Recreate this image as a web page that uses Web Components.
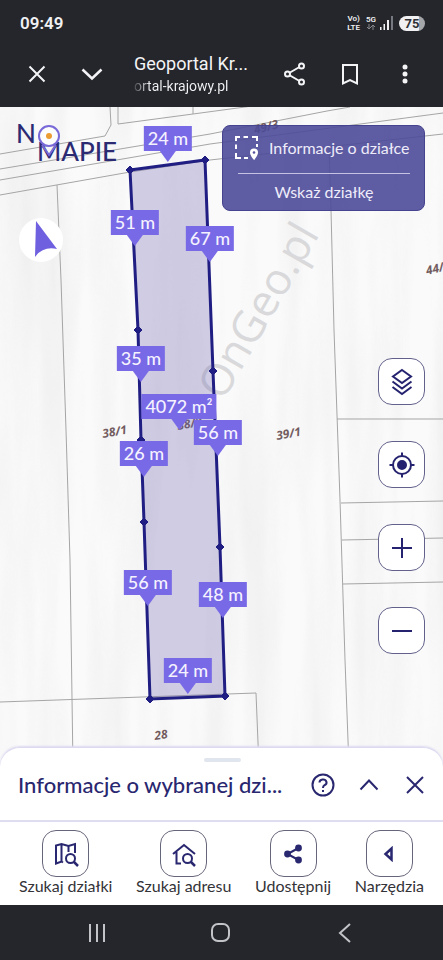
<!DOCTYPE html>
<html lang="pl">
<head>
<meta charset="utf-8">
<meta name="viewport" content="width=device-width, initial-scale=1">
<title>Geoportal Krajowy</title>
<style>
    body {
        margin: 0;
        min-height: 100vh;
        display: flex;
        flex-direction: column;
        background: #fff;
        font-family: Lato, "Open Sans", sans-serif;
        color: #29276f;
    }
    parcel-map {
        flex: 1;
    }
</style>
</head>
<body>
<status-bar></status-bar>
<browser-bar></browser-bar>
<parcel-map>
    <map-pin style="left: 168px; top: 55px">24 m</map-pin>
    <map-pin style="left: 135px; top: 139px">51 m</map-pin>
    <map-pin style="left: 210px; top: 155px">67 m</map-pin>
    <map-pin style="left: 141px; top: 275px">35 m</map-pin>
    <map-pin style="left: 179px; top: 323px">4072 m²</map-pin>
    <map-pin style="left: 218px; top: 349px">56 m</map-pin>
    <map-pin style="left: 144px; top: 370px">26 m</map-pin>
    <map-pin style="left: 148px; top: 499px">56 m</map-pin>
    <map-pin style="left: 223px; top: 511px">48 m</map-pin>
    <map-pin style="left: 188px; top: 587px">24 m</map-pin>
    <parcel-card slot="card"></parcel-card>
    <icon-button slot="controls" label="Warstwy">
        <svg width="24" height="32" viewBox="0 0 24 32" fill="none" stroke="#25236f" stroke-width="2"><path d="M12 4 21 10.500 12 17 3 10.500Z"/><path d="M2.500 15.500 12 22.500 21.500 15.500"/><path d="M2.500 21 12 28 21.500 21"/></svg>
    </icon-button>
    <icon-button slot="controls" label="Moja lokalizacja">
        <svg width="28" height="28" viewBox="0 0 28 28" fill="none" stroke="#25236f" stroke-width="2"><circle cx="14" cy="14" r="9"/><circle cx="14" cy="14" r="4" fill="#25236f"/><path d="M14 1.500V6M14 22v4.500M1.500 14H6M22 14h4.500"/></svg>
    </icon-button>
    <icon-button slot="controls" label="Przybliż">
        <svg width="24" height="24" viewBox="0 0 24 24" stroke="#25236f" stroke-width="2"><path d="M2 12h20M12 2v20"/></svg>
    </icon-button>
    <icon-button slot="controls" label="Oddal">
        <svg width="24" height="24" viewBox="0 0 24 24" stroke="#25236f" stroke-width="2"><path d="M2 12h20"/></svg>
    </icon-button>
</parcel-map>
<info-sheet>Informacje o wybranej dzi...</info-sheet>
<tool-bar>
    <tool-item label="Szukaj działki">
        <svg width="26" height="26" viewBox="0 0 26 26" fill="none" stroke="#29276f" stroke-width="2"><path d="M10 21.500 8.500 20.500 3 22.500V4.500L8.500 3l7 2L22 3v9M8.500 3v17.500M15.500 5v6"/><circle cx="17.500" cy="17.500" r="4.500"/><path d="m20.500 20.500 4.500 4.500" stroke-width="2.500"/></svg>
    </tool-item>
    <tool-item label="Szukaj adresu">
        <svg width="26" height="26" viewBox="0 0 26 26" fill="none" stroke="#29276f" stroke-width="2"><path d="M2 13 13 4l11 9M5.500 11v11.500H10"/><circle cx="16.500" cy="17.500" r="4.500"/><path d="m19.500 20.500 4.500 4.500" stroke-width="2.500"/></svg>
    </tool-item>
    <tool-item label="Udostępnij">
        <svg width="20" height="20" viewBox="0 0 20 20" fill="#29276f"><path d="M15.500 4 4.500 10l11 6" fill="none" stroke="#29276f" stroke-width="2"/><circle cx="15.500" cy="4" r="3.400"/><circle cx="4.500" cy="10" r="3.400"/><circle cx="15.500" cy="16" r="3.400"/></svg>
    </tool-item>
    <tool-item label="Narzędzia">
        <svg width="16" height="16" viewBox="0 0 16 16" fill="none" stroke="#29276f" stroke-width="2.500"><path d="M10.500 2.500v11L4.500 8Z"/></svg>
    </tool-item>
</tool-bar>
<nav-bar></nav-bar>

<script>
class StatusBar extends HTMLElement {
    connectedCallback() {
        const shadow = this.attachShadow({ mode: 'open' });
        shadow.innerHTML = `
        <style>
            :host {
                display: flex;
                justify-content: space-between;
                align-items: center;
                height: 46px;
                padding: 0 18px 0 20px;
                background: #24262c;
                color: #f1f1f3;
                font-family: Roboto, sans-serif;
            }
            .time {
                font-size: 17px;
                font-weight: 600;
            }
            .signals {
                display: flex;
                align-items: center;
                gap: 6px;
            }
            .stack {
                display: flex;
                flex-direction: column;
                align-items: center;
                font-size: 8px;
                line-height: 8px;
                font-weight: 600;
            }
            .volte {
                line-height: 9px;
            }
            .network {
                display: flex;
                align-items: center;
                gap: 3px;
            }
            .battery {
                width: 26px;
                border-radius: 8px;
                background: linear-gradient(90deg, #f1f1f3 76%, #a5a6aa 76%);
                color: #303137;
                font-size: 13px;
                line-height: 15px;
                font-weight: 700;
                text-align: center;
            }
        </style>
        <span class="time">09:49</span>
        <div class="signals">
            <div class="stack volte"><span>Vo)</span><span>LTE</span></div>
            <div class="network">
                <div class="stack">
                    <span>5G</span>
                    <svg width="10" height="6" viewBox="0 0 10 6" fill="none" stroke="#85868c"><path d="M3 0v5M1 3l2 2 2-2M7 6V1M5 3l2-2 2 2"/></svg>
                </div>
                <svg width="14" height="14" viewBox="0 0 14 14" fill="#f1f1f3"><path d="M1 11h1.500v3H1zM4.500 8H6v6H4.500zM8 4h2v10H8z"/><path d="M12 0h2v14h-2z" fill="#777980"/></svg>
            </div>
            <span class="battery">75</span>
        </div>
        `;
    }
}

customElements.define("status-bar", StatusBar);


class BrowserBar extends HTMLElement {
    connectedCallback() {
        const shadow = this.attachShadow({ mode: 'open' });
        shadow.innerHTML = `
        <style>
            :host {
                display: flex;
                align-items: center;
                height: 61px;
                padding: 0 19px 0 18px;
                background: #24262c;
                color: #f4f4f6;
                font-family: Roboto, sans-serif;
                box-sizing: border-box;
            }
            button {
                display: flex;
                justify-content: center;
                width: 38px;
                padding: 8px 0;
                border: 0;
                background: none;
                cursor: pointer;
            }
            .left, .right {
                display: flex;
                gap: 17px;
                padding-bottom: 6px;
            }
            .page {
                flex: 1;
                min-width: 0;
                padding: 0 0 5px 23px;
                overflow: hidden;
                white-space: nowrap;
            }
            .title {
                font-size: 18px;
                line-height: 24px;
            }
            .address {
                font-size: 14px;
                line-height: 21px;
                background: linear-gradient(90deg, #44464c, #f4f4f6 16px);
                background-clip: text;
                color: transparent;
            }
        </style>
        <div class="left">
            <button aria-label="Zamknij">
                <svg width="20" height="20" viewBox="0 0 20 20" fill="none" stroke="#f4f4f6" stroke-width="2"><path d="m2.500 2.500 15 15M17.500 2.500l-15 15"/></svg>
            </button>
            <button aria-label="Zwiń">
                <svg width="22" height="20" viewBox="0 0 22 20" fill="none" stroke="#f4f4f6" stroke-width="2.500"><path d="m1.500 5.500 9.500 9 9.500-9"/></svg>
            </button>
        </div>
        <div class="page">
            <div class="title">Geoportal Kr...</div>
            <div class="address">ortal-krajowy.pl</div>
        </div>
        <div class="right">
            <button aria-label="Udostępnij">
                <svg width="22" height="24" viewBox="0 0 22 24" fill="none" stroke="#f4f4f6" stroke-width="2"><path d="M15.500 5 6 10.500M6 13.500l9.500 5.500"/><circle cx="17.500" cy="4" r="2.500"/><circle cx="3.500" cy="12" r="2.500"/><circle cx="17.500" cy="20" r="2.500"/></svg>
            </button>
            <button aria-label="Zakładka">
                <svg width="20" height="24" viewBox="0 0 20 24" fill="none" stroke="#f4f4f6" stroke-width="2"><path d="M3 21.500V3h14v18.500L10 18Z"/></svg>
            </button>
            <button aria-label="Więcej">
                <svg width="8" height="24" viewBox="0 0 8 24" fill="#f4f4f6"><circle cx="4" cy="5" r="2.500"/><circle cx="4" cy="12" r="2.500"/><circle cx="4" cy="19" r="2.500"/></svg>
            </button>
        </div>
        `;
    }
}

customElements.define("browser-bar", BrowserBar);


class ParcelMap extends HTMLElement {
    connectedCallback() {
        const shadow = this.attachShadow({ mode: 'open' });
        shadow.innerHTML = `
        <style>
            :host {
                display: block;
                position: relative;
                min-height: 640px;
                overflow: hidden;
                background: #f8f8f9;
            }
            .plan {
                position: absolute;
                inset: 0;
                width: 100%;
                height: 100%;
            }
            .borders {
                fill: none;
                stroke: #a5a5a5;
                stroke-width: 1;
            }
            .numbers {
                font: italic 700 12px "Open Sans", sans-serif;
                fill: #725c60;
            }
            .logo, .compass {
                position: absolute;
                left: 16px;
            }
            .logo {
                top: 14px;
            }
            .compass {
                top: 111px;
            }
            .logo text {
                font: 500 26px Lato, sans-serif;
                fill: #2b2a72;
            }
            .card {
                position: absolute;
                top: 18px;
                right: 18px;
            }
            .controls {
                position: absolute;
                right: 18px;
                bottom: 113px;
                display: flex;
                flex-direction: column;
                gap: 36px;
            }
        </style>
        <svg class="plan">
            <defs>
                <filter id="relief" x="0" y="0" width="100%" height="100%">
                    <feTurbulence type="fractalNoise" baseFrequency="0.03 0.003" numOctaves="3" seed="8"/>
                    <feColorMatrix values="0 0 0 0 0.55  0 0 0 0 0.55  0 0 0 0 0.57  0.8 0 0 0 -0.3"/>
                </filter>
            </defs>
            <rect width="100%" height="100%" fill="#fafafa"/>
            <rect width="100%" height="100%" filter="url(#relief)" opacity="0.5"/>
            <text transform="translate(223 295) rotate(-60)" font-family="Open Sans" font-size="44" fill="#d9d9db">OnGeo.pl</text>
            <g class="borders">
                <path d="M0 47 105 29 111 18 110 0M118 0V17L193 7 260-2M193 0v7"/>
                <path d="M0 62 210 27 327 4 350 0M0 73 210 37 443 6M0 88 130 65 210 53 443 27"/>
                <path d="M57 78 61 173 66 323 70 453 73 660M0 595 256 586 259 660"/>
                <path d="M329 39 331 103 334 223 340 393 345 553 349 660"/>
                <path d="M337 312H2000M341 396 443 394H2000M342 433 443 431H2000M343 477 443 475H2000"/>
            </g>
            <g class="numbers">
                <text transform="translate(103 331) rotate(-10)">38/1</text>
                <text transform="translate(277 333) rotate(-10)">39/1</text>
                <text transform="translate(178 323) rotate(-10)">38/2</text>
                <text transform="translate(155 633) rotate(-8)">28</text>
                <text transform="translate(255 27) rotate(-14)">49/3</text>
                <text transform="translate(427 168) rotate(-14)">44/2</text>
                <text transform="translate(-23 323) rotate(-10)">37/1</text>
            </g>
            <path d="M130 63 205 53 213 264 220 440 225 589 150 592 144 415 141 333 138 223Z" fill="#6d63b0" fill-opacity="0.3" stroke="#201e82" stroke-width="3"/>
            <path d="m130 59 4 4-4 4-4-4zM205 49l4 4-4 4-4-4zM213 260l4 4-4 4-4-4zM220 436l4 4-4 4-4-4zM225 585l4 4-4 4-4-4zM150 588l4 4-4 4-4-4zM144 411l4 4-4 4-4-4zM141 329l4 4-4 4-4-4zM138 219l4 4-4 4-4-4z" fill="#201e82" stroke="#201e82"/>
        </svg>
        <svg class="logo" width="110" height="46" viewBox="0 0 110 46" role="img" aria-label="No Mapie">
            <text x="0" y="22">N</text>
            <text x="21" y="40">MAPIE</text>
            <circle cx="33" cy="15" r="10" fill="#fff" fill-opacity="0.7" stroke="#7869d8" stroke-width="2"/>
            <path d="m26 24 7 10 7-10" fill="none" stroke="#7869d8" stroke-width="2"/>
            <circle cx="33" cy="15" r="3" fill="#eb9c33"/>
        </svg>
        <svg class="compass" width="50" height="44" viewBox="0 0 50 44">
            <circle cx="25" cy="22" r="22" fill="#fff"/>
            <path d="M20 3 41 31Q27 28 19 39Z" fill="#6f60df"/>
        </svg>
        <slot></slot>
        <div class="card"><slot name="card"></slot></div>
        <div class="controls"><slot name="controls"></slot></div>
        `;
    }
}

customElements.define("parcel-map", ParcelMap);


// left and top give the tip of the pin
class MapPin extends HTMLElement {
    connectedCallback() {
        const shadow = this.attachShadow({ mode: 'open' });
        shadow.innerHTML = `
        <style>
            :host {
                position: absolute;
                display: flex;
                flex-direction: column;
                align-items: center;
                transform: translate(-50%, -100%);
                white-space: nowrap;
            }
            .text {
                padding: 0 4px;
                background: #7869e6;
                color: #f5f2ff;
                font-size: 18px;
                line-height: 25px;
                font-weight: 500;
            }
            .tail {
                border: 8px solid transparent;
                border-top: 11px solid #7869e6;
                border-bottom: 0;
            }
        </style>
        <span class="text"><slot></slot></span>
        <span class="tail"></span>
        `;
    }
}

customElements.define("map-pin", MapPin);


class ParcelCard extends HTMLElement {
    connectedCallback() {
        const shadow = this.attachShadow({ mode: 'open' });
        shadow.innerHTML = `
        <style>
            :host {
                display: block;
                box-sizing: border-box;
                width: 203px;
                padding: 0 10px 0 11px;
                border: 1px solid #46438f;
                border-radius: 8px;
                background: rgba(77, 74, 152, 0.9);
                color: #eeecfa;
            }
            .head {
                display: flex;
                align-items: center;
                gap: 10px;
                height: 43px;
                padding-bottom: 4px;
                font-size: 16px;
                white-space: nowrap;
            }
            button {
                display: block;
                width: 172px;
                height: 37px;
                margin: 0 auto;
                padding: 0 0 2px;
                border: 0;
                border-top: 1px solid #c5c2e4;
                background: none;
                color: inherit;
                font: inherit;
                font-size: 16px;
                cursor: pointer;
            }
        </style>
        <div class="head">
            <svg width="25" height="25" viewBox="0 0 25 25" fill="none" stroke="#fff" stroke-width="2"><path d="M2 6V2h4M9.500 2h4.500M18 2h5v4M23 9v3M2 9.500V14M2 18v5h5M10 23h4"/><path d="M20 25s-4-4.500-4-7.500a4 4 0 0 1 8 0c0 3-4 7.500-4 7.500Z" fill="#fff" stroke="none"/><circle cx="20" cy="17.500" r="1.300" fill="#5552a0" stroke="none"/></svg>
            <span>Informacje o działce</span>
        </div>
        <button>Wskaż działkę</button>
        `;
    }
}

customElements.define("parcel-card", ParcelCard);


class IconButton extends HTMLElement {
    connectedCallback() {
        const shadow = this.attachShadow({ mode: 'open' });
        shadow.innerHTML = `
        <style>
            :host {
                display: block;
            }
            button {
                display: flex;
                align-items: center;
                justify-content: center;
                width: 47px;
                height: 47px;
                padding: 0;
                border: 1px solid #62618b;
                border-radius: 14px;
                background: #fff;
                cursor: pointer;
            }
        </style>
        <button aria-label="${this.getAttribute('label')}"><slot></slot></button>
        `;
    }
}

customElements.define("icon-button", IconButton);


class InfoSheet extends HTMLElement {
    connectedCallback() {
        const shadow = this.attachShadow({ mode: 'open' });
        shadow.innerHTML = `
        <style>
            :host {
                display: block;
                position: relative;
                box-sizing: border-box;
                height: 75px;
                margin-top: -20px;
                padding: 10px 16px 0 18px;
                border-top: 1px solid #dcdaf0;
                border-bottom: 2px solid #dfddf0;
                border-radius: 20px 20px 0 0;
                background: #fff;
                box-shadow: 0 -1px 2px #dcdaf0;
            }
            .handle {
                width: 37px;
                height: 4px;
                margin: 0 auto;
                border-radius: 2px;
                background: #e1e6ee;
            }
            .row {
                display: flex;
                align-items: center;
                justify-content: space-between;
                height: 45px;
            }
            h2 {
                margin: 0;
                font-size: 22px;
                font-weight: 500;
                line-height: 28px;
                white-space: nowrap;
            }
            .actions {
                display: flex;
                gap: 22px;
            }
            button {
                display: flex;
                padding: 0;
                border: 0;
                background: none;
                cursor: pointer;
            }
            svg {
                fill: none;
                stroke: #29276f;
                stroke-width: 2;
            }
        </style>
        <div class="handle"></div>
        <div class="row">
            <h2><slot></slot></h2>
            <div class="actions">
                <button aria-label="Pomoc"><svg width="24" height="24" viewBox="0 0 24 24"><circle cx="12" cy="12" r="10.500"/><path d="M8.500 9.500a3.500 3 0 1 1 5 2.700Q12 13 12 15M12 17v2"/></svg></button>
                <button aria-label="Rozwiń"><svg width="24" height="24" viewBox="0 0 24 24"><path d="m3.500 16.500 8.500-9 8.500 9"/></svg></button>
                <button aria-label="Zamknij"><svg width="24" height="24" viewBox="0 0 24 24"><path d="m4 4 16 16M20 4 4 20"/></svg></button>
            </div>
        </div>
        `;
    }
}

customElements.define("info-sheet", InfoSheet);


class ToolBar extends HTMLElement {
    connectedCallback() {
        const shadow = this.attachShadow({ mode: 'open' });
        shadow.innerHTML = `
        <style>
            :host {
                display: flex;
                justify-content: space-between;
                box-sizing: border-box;
                height: 83px;
                padding: 8px 19px 0;
                background: #fff;
            }
        </style>
        <slot></slot>
        `;
    }
}

customElements.define("tool-bar", ToolBar);


class ToolItem extends HTMLElement {
    connectedCallback() {
        const shadow = this.attachShadow({ mode: 'open' });
        shadow.innerHTML = `
        <style>
            :host {
                display: block;
            }
            button {
                display: flex;
                flex-direction: column;
                align-items: center;
                padding: 0;
                border: 0;
                background: none;
                color: #333338;
                font: inherit;
                font-size: 16px;
                line-height: 18px;
                white-space: nowrap;
                cursor: pointer;
            }
            .icon {
                display: flex;
                align-items: center;
                justify-content: center;
                box-sizing: border-box;
                width: 47px;
                height: 47px;
                border: 1px solid #66667a;
                border-radius: 14px;
            }
        </style>
        <button>
            <span class="icon"><slot></slot></span>
            <span>${this.getAttribute('label')}</span>
        </button>
        `;
    }
}

customElements.define("tool-item", ToolItem);


class NavBar extends HTMLElement {
    connectedCallback() {
        const shadow = this.attachShadow({ mode: 'open' });
        shadow.innerHTML = `
        <style>
            :host {
                display: flex;
                align-items: center;
                justify-content: center;
                gap: 100px;
                height: 55px;
                background: #24262c;
            }
            button {
                display: flex;
                padding: 0;
                border: 0;
                background: none;
                cursor: pointer;
            }
            svg {
                fill: none;
                stroke: #c3c4c8;
                stroke-width: 2;
            }
        </style>
        <button aria-label="Ostatnie"><svg width="24" height="24" viewBox="0 0 24 24"><path d="M4 3v18M11 3v18M18 3v18"/></svg></button>
        <button aria-label="Ekran główny"><svg width="24" height="24" viewBox="0 0 24 24"><rect x="2" y="3" width="17" height="17" rx="6"/></svg></button>
        <button aria-label="Wstecz"><svg width="24" height="24" viewBox="0 0 24 24"><path d="m16 3-10 9 10 9"/></svg></button>
        `;
    }
}

customElements.define("nav-bar", NavBar);
</script>
</body>
</html>
